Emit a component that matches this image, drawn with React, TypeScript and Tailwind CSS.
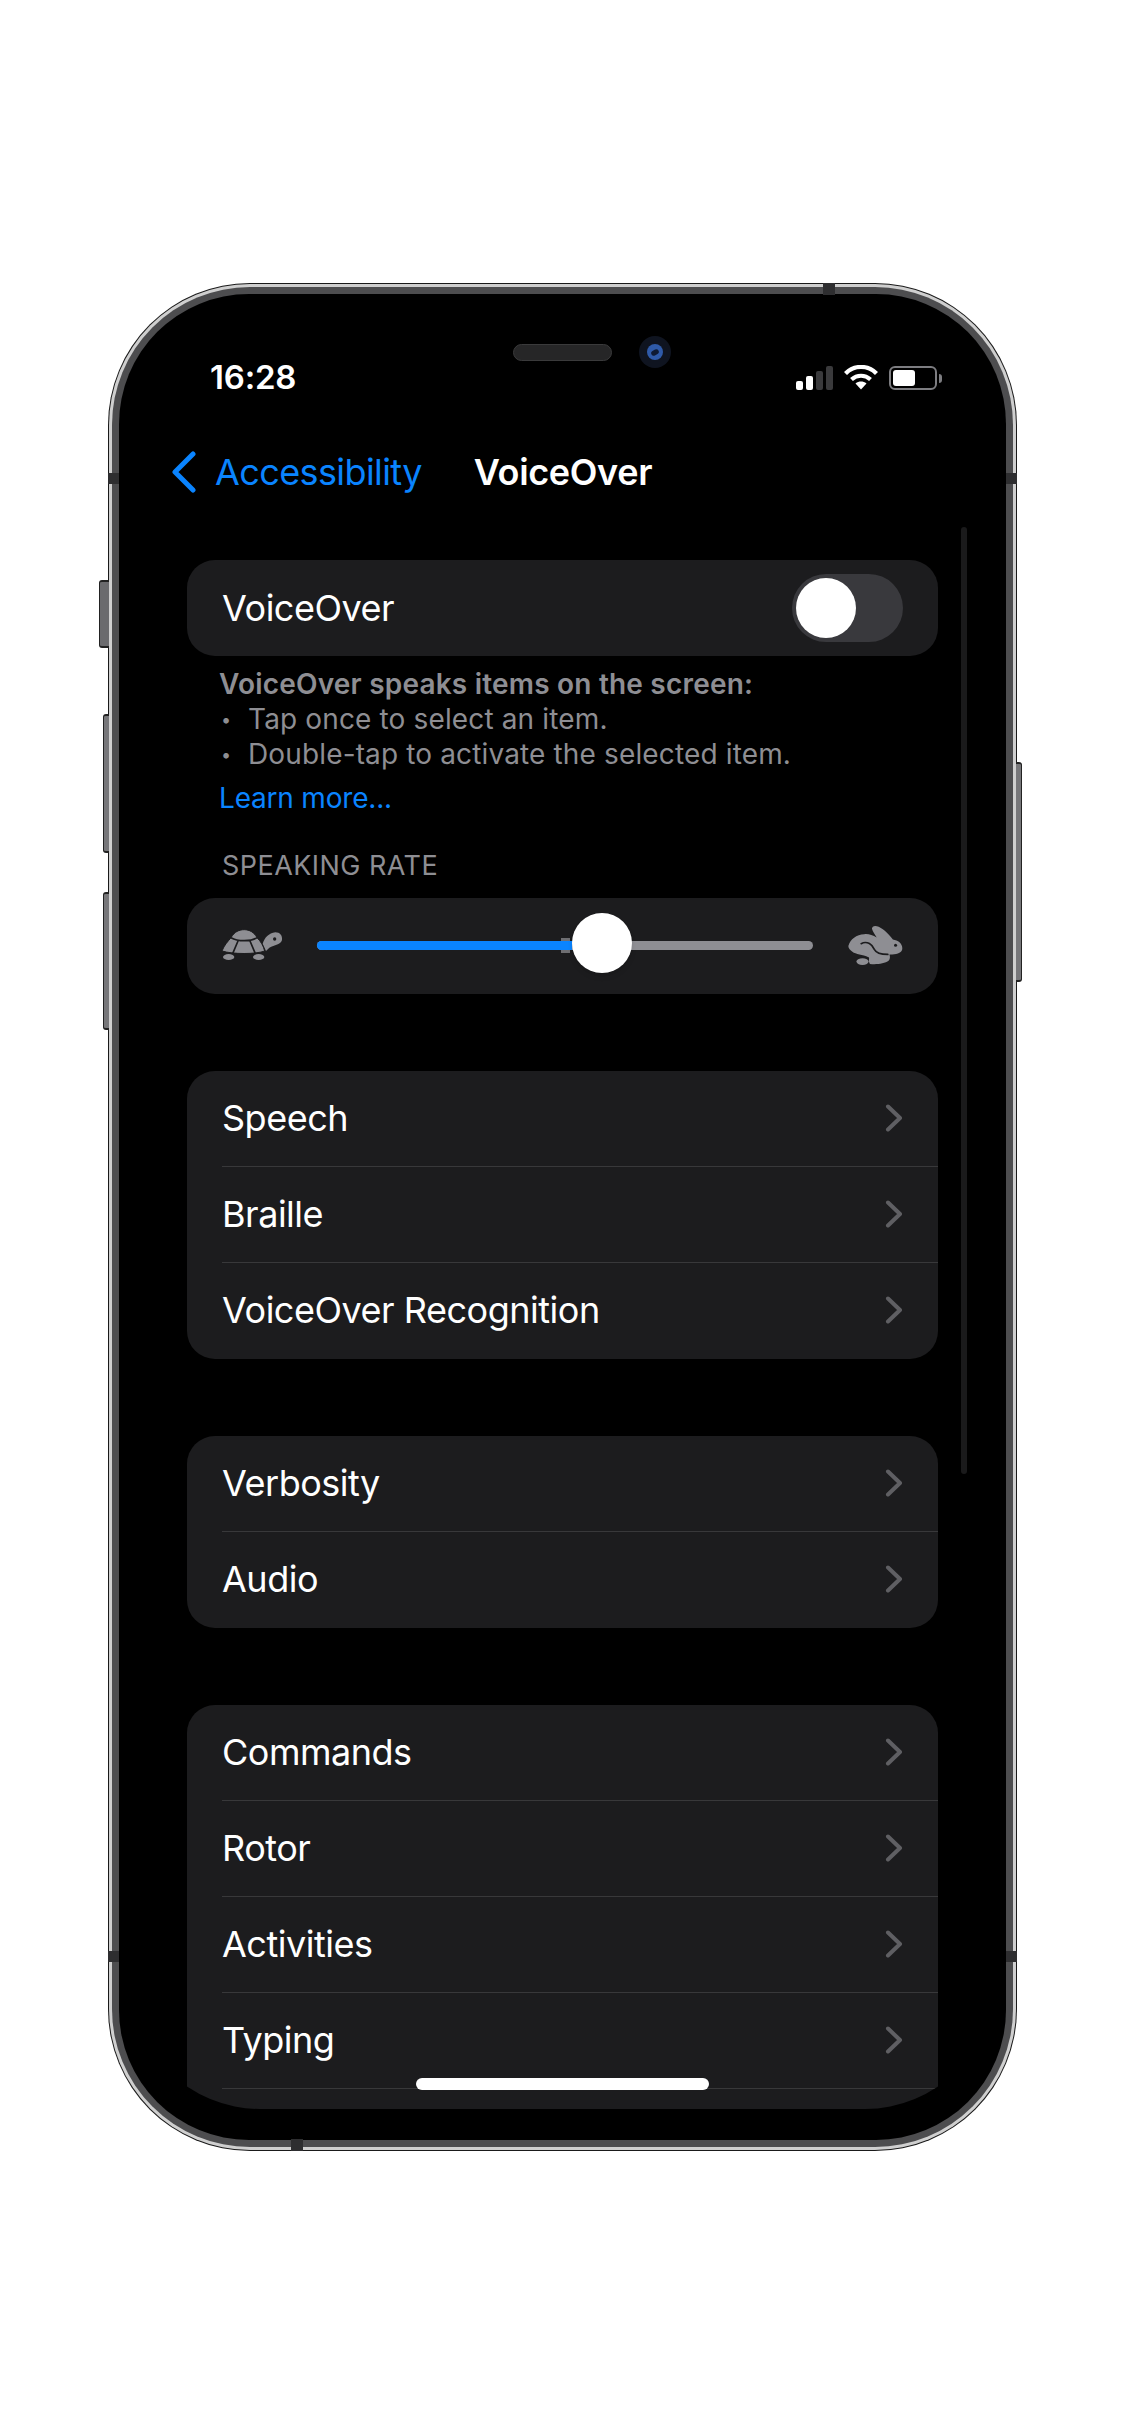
import React from 'react';

const ROW_FONT = "font-['Inter','Liberation_Sans',sans-serif]";

const Chevron: React.FC = () => (
  <svg width="18" height="28" viewBox="0 0 18 28" fill="none" className="shrink-0 -translate-y-px">
    <path d="M3 2.5 15 14 3 25.5" stroke="#5f5f63" strokeWidth="4" strokeLinecap="round" strokeLinejoin="round" />
  </svg>
);

const Row: React.FC<{ label: string; last?: boolean }> = ({ label, last }) => (
  <div className="h-[96px] pl-[35px] relative flex items-center">
    <div className={`flex-1 h-full flex items-center justify-between pr-[35px] ${last ? '' : 'border-b border-[#38383a]'}`}>
      <span className="text-[36px] text-white tracking-[-0.48px] -translate-y-px">{label}</span>
      <Chevron />
    </div>
  </div>
);

// clipped: the list runs on below the visible part of the screen
const Group: React.FC<{ rows: string[]; clipped?: boolean }> = ({ rows, clipped }) => (
  <div className="bg-[#1c1c1e] rounded-[28px] overflow-hidden mb-[77px]">
    {rows.map((r, i) => (
      <Row key={r} label={r} last={!clipped && i === rows.length - 1} />
    ))}
    {clipped && <div className="h-[60px]" />}
  </div>
);

const Turtle: React.FC = () => (
  <svg width="62" height="32" viewBox="15 22 186 96" className="shrink-0">
    <path d="M140 66C146 48 158 35 178 32c14 0 22 10 20 23-3 13-23 15-38 23l-10 10Z" fill="#8e8e93" />
    <circle cx="176" cy="52" r="5" fill="#1c1c1e" />
    <path
      d="M18 88C25 70 35 60 45 48 55 30 70 24 85 24c15 0 30 8 38 24 12 12 19 24 23 40-26 10-96 10-128 0Z"
      fill="#8e8e93"
      stroke="#1c1c1e"
      strokeWidth="3"
    />
    <path d="M45 48c20 12 60 12 78 0M66 58 50 96M102 58l16 38" stroke="#1c1c1e" strokeWidth="5" fill="none" />
    <ellipse cx="38" cy="106" rx="17" ry="9" fill="#8e8e93" />
    <ellipse cx="128" cy="106" rx="17" ry="9" fill="#8e8e93" />
  </svg>
);

const Rabbit: React.FC = () => (
  <svg width="55" height="40" viewBox="27 13 163 118" className="shrink-0">
    <path
      d="M28 75C34 55 52 40 75 40c10-2 25 2 37 10-4-8-12-18-14-26 0-9 10-11 20-6 17 8 32 24 42 38 15 2 28 12 28 26 0 12-13 18-30 18h-8c2 8 2 12-2 18-13 10-38 12-56 10-6-10 0-18-4-20-18-8-38-8-48-16-6-4-12-10-12-17Z"
      fill="#8e8e93"
    />
    <path d="M66 68c18-10 34 4 39 17 5 10 20 15 40 15" stroke="#1c1c1e" strokeWidth="5" fill="none" strokeLinecap="round" />
    <circle cx="168" cy="73" r="4.5" fill="#1c1c1e" />
    <ellipse cx="70" cy="121" rx="18" ry="10" fill="#8e8e93" />
  </svg>
);

const StatusIcons: React.FC = () => (
  <div className="flex items-end">
    <div className="flex items-end gap-[3px] mr-[11px]">
      <div className="w-[7px] h-[9px] rounded-[2px] bg-white" />
      <div className="w-[7px] h-[14px] rounded-[2px] bg-white" />
      <div className="w-[7px] h-[19px] rounded-[2px] bg-[#3a3a3c]" />
      <div className="w-[7px] h-[24px] rounded-[2px] bg-[#3a3a3c]" />
    </div>
    <svg width="34" height="25" viewBox="0 0 34 25" fill="none" className="mr-[11px]">
      <path d="M1.5 8.5C10-.3 24-.3 32.5 8.5" stroke="#fff" strokeWidth="4.2" />
      <path d="M7.5 14.5c5.5-5 13.5-5 19 0" stroke="#fff" strokeWidth="4.2" />
      <path d="M11.5 18.5c3.5-2.6 7.5-2.6 11 0L17 24.5Z" fill="#fff" />
    </svg>
    <div className="w-[48px] h-[24px] rounded-[6px] border-2 border-[#7d7d81] p-[2px] flex">
      <div className="w-[22px] h-full rounded-[3px] bg-white" />
    </div>
    <div className="w-[3px] h-[9px] rounded-r-[3px] bg-[#7d7d81] ml-[2px] mb-[7px]" />
  </div>
);

export default function App() {
  return (
    <div className={`min-h-[2436px] bg-white pt-[283px] pl-[108px] ${ROW_FONT}`}>
      <div className="relative w-[909px] h-[1868px]">
        {/* side buttons */}
        <div className="absolute left-[-9px] top-[297px] w-[10px] h-[68px] rounded-l-[3px] bg-[#6b6b6e] border-y-2 border-l border-[#222]" />
        <div className="absolute left-[-5px] top-[431px] w-[6px] h-[139px] rounded-l-[3px] bg-[#77777a] border-y-2 border-l border-[#222]" />
        <div className="absolute left-[-5px] top-[609px] w-[6px] h-[138px] rounded-l-[3px] bg-[#77777a] border-y-2 border-l border-[#222]" />
        <div className="absolute right-[-5px] top-[479px] w-[6px] h-[220px] rounded-r-[3px] bg-[#77777a] border-y-2 border-r border-[#222]" />

        {/* frame */}
        <div className="h-full rounded-[142px] bg-[#1a1a1a] p-px">
          <div className="h-full rounded-[141px] bg-[#cfcfcf] p-[3px]">
            <div className="h-full rounded-[138px] bg-[#4d4d4f] p-[7px]">
              <div className="relative h-full rounded-[130px] bg-black flex flex-col overflow-hidden">
                {/* earpiece and camera */}
                <div className="absolute left-[394px] top-[50px] w-[99px] h-[17px] rounded-full bg-[#262627] border border-[#3a3a3b]" />
                <div className="absolute left-[520px] top-[42px] w-[32px] h-[32px] rounded-full bg-[#0f1420] flex items-center justify-center">
                  <div className="w-[16px] h-[16px] rounded-full bg-[#2f5aa8] flex items-center justify-center">
                    <div className="w-[8px] h-[5px] -rotate-30 rounded-full bg-[#0f1a33]" />
                  </div>
                </div>

                <div className="mt-[66px] h-[34px] pl-[91px] pr-[64px] flex items-center justify-between shrink-0">
                  <span className="text-[33px] font-semibold text-white tracking-[-0.2px] translate-y-px">16:28</span>
                  <StatusIcons />
                </div>

                <div className="mt-[48px] h-[60px] relative flex items-center pl-[52px] shrink-0">
                  <svg width="26" height="42" viewBox="0 0 26 42" fill="none" className="mr-[18px]">
                    <path d="M22 3 4 21l18 18" stroke="#0a84ff" strokeWidth="5" strokeLinecap="round" strokeLinejoin="round" />
                  </svg>
                  <span className="text-[36px] text-[#0a84ff] tracking-[-0.6px]">Accessibility</span>
                  <span className="ml-[52px] text-[36px] font-semibold text-white tracking-[-0.35px]">VoiceOver</span>
                </div>

                <div className="flex-1 min-h-0 mx-[11px] mb-[31px] rounded-b-[130px] overflow-hidden px-[57px] pt-[58px]">
                  <div className="bg-[#1c1c1e] rounded-[28px] h-[96px] pl-[35px] pr-[35px] flex items-center justify-between">
                    <span className="text-[36px] text-white tracking-[-0.48px]">VoiceOver</span>
                    <div className="w-[111px] h-[68px] rounded-full bg-[#39393d] p-[4px]">
                      <div className="w-[60px] h-[60px] rounded-full bg-white" />
                    </div>
                  </div>

                  <div className="pl-[32px] pt-[11px] text-[28px] leading-[35px] text-[#8e8e93]">
                    <div className="font-semibold tracking-[0.2px]">VoiceOver speaks items on the screen:</div>
                    <div className="flex tracking-[0.14px]"><span className="w-[29px] pl-[2px] text-[18px]">•</span>Tap once to select an item.</div>
                    <div className="flex tracking-[0.14px]"><span className="w-[29px] pl-[2px] text-[18px]">•</span>Double-tap to activate the selected item.</div>
                    <div className="text-[#0a84ff] mt-[9px] tracking-[-0.2px]">Learn more...</div>
                  </div>
                  <div className="pl-[35px] mt-[33px] text-[27px] leading-[34px] text-[#8e8e93] tracking-[0.45px]">SPEAKING RATE</div>

                  <div className="mt-[15px] bg-[#1c1c1e] rounded-[28px] h-[96px] pl-[34px] pr-[35px] pb-[2px] flex items-center mb-[77px]">
                    <Turtle />
                    <div className="relative flex-1 ml-[34px] mr-[35px] h-[9px] rounded-full bg-[#8e8e93] flex">
                      <div className="absolute left-[244px] top-[-3px] w-[9px] h-[15px] bg-[#6e6e72]" />
                      <div className="relative w-[255px] h-full rounded-l-full bg-[#0a84ff]" />
                      <div className="absolute left-[255px] top-[-28px] w-[60px] h-[60px] rounded-full bg-white shadow-md" />
                    </div>
                    <Rabbit />
                  </div>

                  <Group rows={['Speech', 'Braille', 'VoiceOver Recognition']} />
                  <Group rows={['Verbosity', 'Audio']} />
                  <Group rows={['Commands', 'Rotor', 'Activities', 'Typing']} clipped />
                </div>

                {/* scroll indicator and home bar */}
                <div className="absolute left-[842px] top-[233px] w-[6px] h-[947px] rounded-full bg-[#1a1a1b]" />
                <div className="absolute left-[297px] top-[1784px] w-[293px] h-[12px] rounded-full bg-white" />
              </div>
            </div>
          </div>
        </div>

        {/* antenna bands */}
        <div className="absolute left-[715px] top-0 w-[12px] h-[12px] bg-[#2e2e30]" />
        <div className="absolute left-[183px] bottom-0 w-[12px] h-[12px] bg-[#2e2e30]" />
        <div className="absolute left-0 top-[190px] w-[11px] h-[11px] bg-[#2e2e30]" />
        <div className="absolute right-0 top-[190px] w-[11px] h-[11px] bg-[#2e2e30]" />
        <div className="absolute left-0 top-[1668px] w-[11px] h-[11px] bg-[#2e2e30]" />
        <div className="absolute right-0 top-[1668px] w-[11px] h-[11px] bg-[#2e2e30]" />
      </div>
    </div>
  );
}
